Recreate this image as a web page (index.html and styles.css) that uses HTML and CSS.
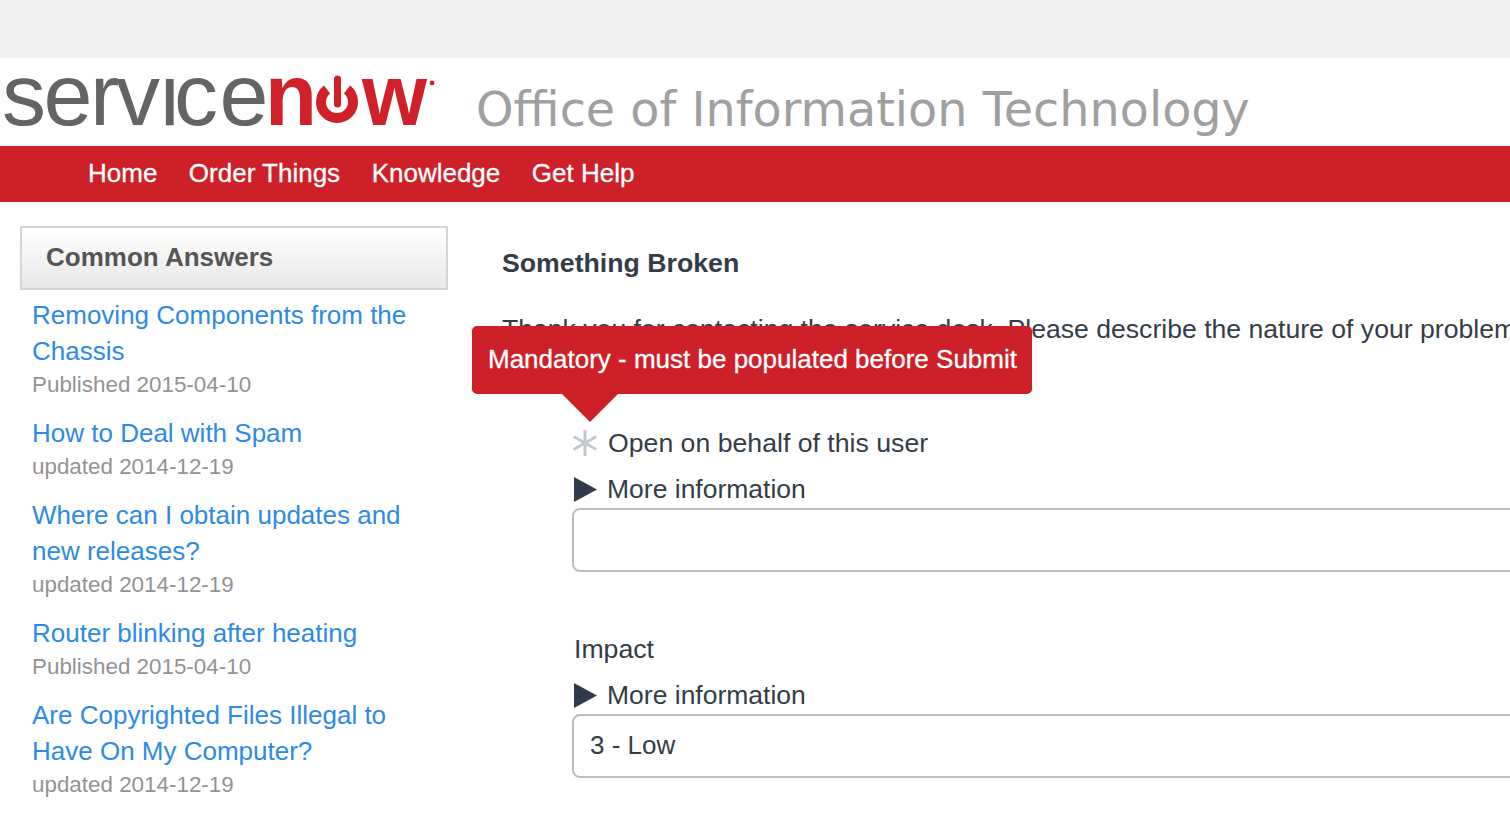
FILE: index.html
```html
<!DOCTYPE html>
<html lang="en">
<head>
<meta charset="utf-8">
<title>Office of Information Technology</title>
<link rel="stylesheet" href="styles.css">
</head>
<body>
<div class="topbar"></div>
<header class="brand">
  <svg class="logo" width="440" height="88" viewBox="0 0 440 88" aria-label="servicenow">
    <defs><clipPath id="xheight"><rect x="0" y="20" width="440" height="68"/></clipPath></defs>
    <g clip-path="url(#xheight)">
      <text class="logo-gray" x="2 43.5 90 116 160 174 219.5" y="67">service</text>
    </g>
    <text class="logo-red" x="265" y="67" textLength="52" lengthAdjust="spacingAndGlyphs">n</text>
    <text class="logo-red" x="362" y="67" textLength="65" lengthAdjust="spacingAndGlyphs">w</text>
    <path class="logo-ring" d="M 327 31.5 A 16 16 0 1 0 347 31.5"/>
    <path class="logo-stem" d="M 337.5 21 V 46"/>
    <circle class="logo-dot" cx="432" cy="25" r="2.4"/>
  </svg>
  <div class="site-title">Office of Information Technology</div>
</header>
<nav class="mainnav">
  <a href="#">Home</a>
  <a href="#">Order Things</a>
  <a href="#">Knowledge</a>
  <a href="#">Get Help</a>
</nav>
<div class="layout">
  <aside class="sidebar">
    <div class="panel-head">Common Answers</div>
    <ul class="answers">
      <li><a href="#">Removing Components from the Chassis</a><div class="meta">Published 2015-04-10</div></li>
      <li><a href="#">How to Deal with Spam</a><div class="meta">updated 2014-12-19</div></li>
      <li><a href="#">Where can I obtain updates and new releases?</a><div class="meta">updated 2014-12-19</div></li>
      <li><a href="#">Router blinking after heating</a><div class="meta">Published 2015-04-10</div></li>
      <li><a href="#">Are Copyrighted Files Illegal to Have On My Computer?</a><div class="meta">updated 2014-12-19</div></li>
    </ul>
  </aside>
  <main class="content">
    <h1 class="title">Something Broken</h1>
    <p class="intro">Thank you for contacting the service desk. Please describe the nature of your problem</p>
    <div class="tooltip">Mandatory - must be populated before Submit</div>
    <form class="form">
      <div class="field first">
        <div class="label-row">
          <svg class="req" width="26" height="26" viewBox="0 0 26 26"><path d="M13 0V26M1.7 6.5 24.3 19.5M1.7 19.5 24.3 6.5"/></svg>
          <span>Open on behalf of this user</span>
        </div>
        <div class="more"><svg class="tri" width="23" height="25" viewBox="0 0 23 25"><path d="M0 0 23 12.5 0 25Z"/></svg><span>More information</span></div>
        <div class="input empty"></div>
      </div>
      <div class="field second">
        <div class="label-row plain">Impact</div>
        <div class="more"><svg class="tri" width="23" height="25" viewBox="0 0 23 25"><path d="M0 0 23 12.5 0 25Z"/></svg><span>More information</span></div>
        <div class="input">3 - Low</div>
      </div>
    </form>
  </main>
</div>
</body>
</html>
```
FILE: styles.css
```css
html, body {
  margin: 0;
  height: 828px;
  overflow: hidden;
  background: #fff;
  font-family: "Liberation Sans", Arial, sans-serif;
}
.topbar { height: 58px; background: #eeeeee; }
.brand { height: 88px; display: flex; align-items: flex-start; }
.logo { flex: none; display: block; }
.logo text { font-family: "Liberation Sans", Arial, sans-serif; font-size: 88px; }
.logo-gray { fill: #636466; }
.logo-red { fill: #d0202a; font-weight: bold; }
.logo-ring { fill: none; stroke: #d0202a; stroke-width: 10; }
.logo-stem { fill: none; stroke: #d0202a; stroke-width: 7; stroke-linecap: round; }
.logo-dot { fill: #d0202a; }
.site-title {
  margin-left: 36px;
  padding-top: 23px;
  font-family: "DejaVu Sans", Verdana, sans-serif;
  font-size: 47.7px;
  line-height: 58px;
  color: #a0a0a0;
  white-space: nowrap;
}
.mainnav {
  box-sizing: border-box;
  height: 56px;
  background: #ce2029;
  display: flex;
  align-items: center;
  gap: 31.5px;
  padding: 0 0 2px 88px;
}
.mainnav a { color: #fff; text-decoration: none; font-size: 26px; -webkit-text-stroke: 0.3px #fff; }
.layout { display: flex; align-items: flex-start; padding: 24px 0 0 20px; }
.sidebar { width: 428px; flex: none; }
.panel-head {
  box-sizing: border-box;
  height: 64px;
  border: 2px solid #d6d6d6;
  padding-left: 24px;
  background: linear-gradient(#ffffff, #e8e8e8);
  color: #555;
  font-size: 26px;
  font-weight: bold;
  line-height: 58px;
}
.answers { list-style: none; margin: 7px 0 0; padding: 0 32px 0 12px; }
.answers li { margin-bottom: 15px; }
.answers a { color: #2d8ae5; text-decoration: none; font-size: 26px; line-height: 36px; display: block; }
.meta { color: #939393; font-size: 22.4px; line-height: 30px; padding-top: 1px; }
.content { position: relative; flex: none; width: 1100px; padding-left: 54px; color: #343d47; }
.title { margin: 19px 0 0; font-size: 26.7px; line-height: 36px; font-weight: bold; }
.intro { margin: 30px 0 0; font-size: 26.6px; line-height: 36px; white-space: nowrap; }
.tooltip {
  position: absolute;
  left: 24px;
  top: 100px;
  box-sizing: border-box;
  width: 560px;
  height: 68px;
  background: #ce2029;
  border-radius: 5px;
  color: #fff;
  font-size: 26px;
  line-height: 66px;
  padding-left: 16px;
  white-space: nowrap;
  -webkit-text-stroke: 0.3px #fff;
}
.tooltip::after {
  content: "";
  position: absolute;
  left: 90px;
  top: 68px;
  border-style: solid;
  border-width: 28px 28px 0;
  border-color: #ce2029 transparent transparent;
}
.form { margin-left: 70px; }
.field.first { margin-top: 78px; }
.field.second { margin-top: 59px; }
.label-row { display: flex; align-items: center; height: 36px; font-size: 26.67px; line-height: 36px; gap: 10px; }
.label-row.plain { padding-left: 2px; }
.req { flex: none; }
.req path { fill: none; stroke: #c4c8cb; stroke-width: 3; }
.more { display: flex; align-items: center; height: 36px; margin-top: 10px; padding-left: 2px; gap: 10px; font-size: 26.5px; line-height: 36px; }
.tri { flex: none; }
.tri path { fill: #2f3b48; }
.input {
  box-sizing: border-box;
  width: 1000px;
  height: 64px;
  margin-top: 1px;
  border: 2px solid #bdbdbd;
  border-radius: 8px;
  padding-left: 16px;
  font-size: 26px;
  line-height: 58px;
}
```
